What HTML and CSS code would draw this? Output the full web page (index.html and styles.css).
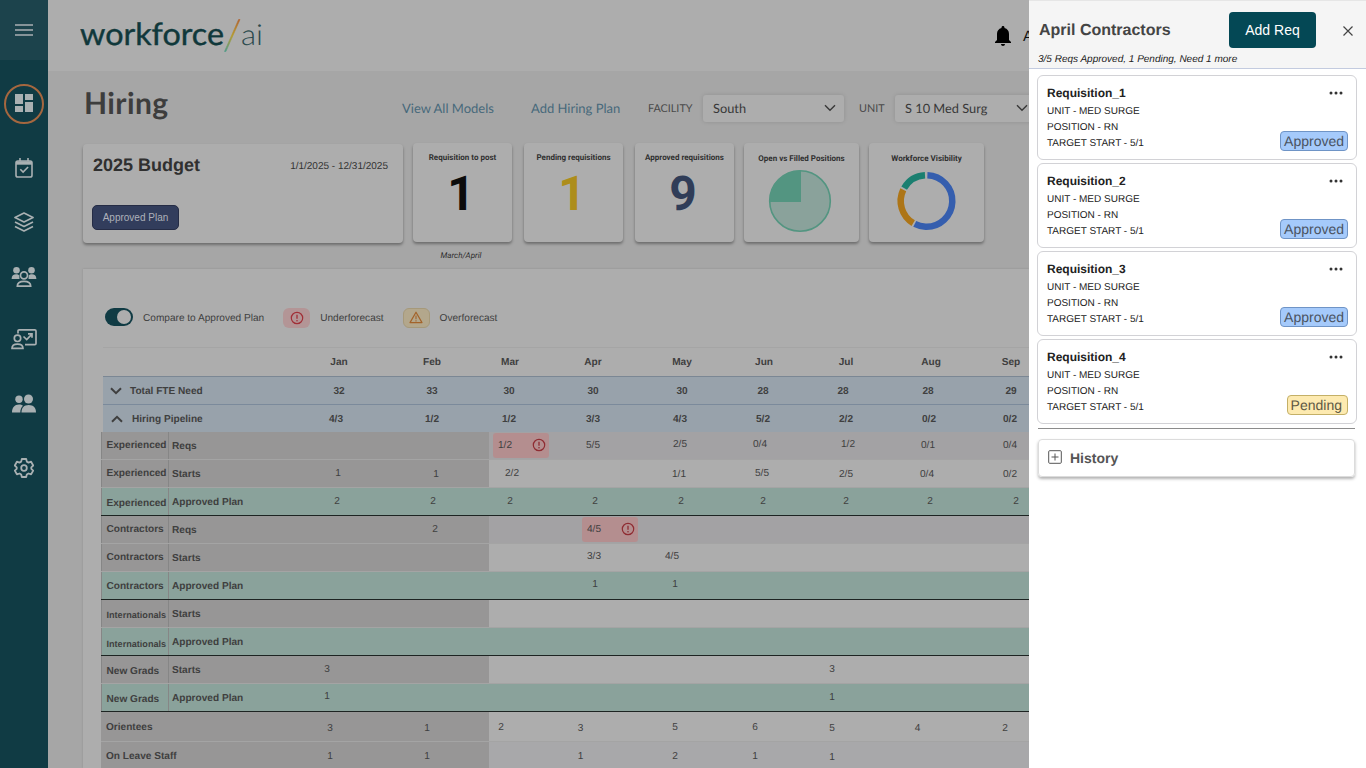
FILE: index.html
```html
<!DOCTYPE html>
<html lang="en">
<head>
    <meta charset="utf-8">
    <title>Workforce AI - Hiring</title>
    <link rel="stylesheet" href="styles.css">
</head>
<body>
    <svg class="defs" width="0" height="0">
        <symbol id="alert" viewBox="0 0 14 14">
            <circle cx="7" cy="7" r="5.7" fill="none" stroke="currentColor" stroke-width="1.2"/>
            <path d="M7 3.8v4" stroke="currentColor" stroke-width="1.3"/>
            <circle cx="7" cy="9.8" r=".8" fill="currentColor"/>
        </symbol>
        <symbol id="chevron" viewBox="0 0 12 8">
            <path d="M1 1.2l5 5 5-5" fill="none" stroke="currentColor"/>
        </symbol>
        <symbol id="dots" viewBox="0 0 14 4">
            <circle cx="2" cy="2" r="1.5"/><circle cx="7" cy="2" r="1.5"/><circle cx="12" cy="2" r="1.5"/>
        </symbol>
    </svg>
    <div class="app">
        <nav class="sidebar">
            <div class="menu">
                <svg width="18" height="12" viewBox="0 0 18 12"><path d="M0 1h18M0 6h18M0 11h18" stroke="#a9b0b2" stroke-width="1.6"/></svg>
            </div>
            <div class="nav-item active">
                <svg width="18" height="18" viewBox="0 0 18 18" fill="#a9b0b2"><path d="M0 0h8v10H0zM10 0h8v6h-8zM0 12h8v6H0zM10 8h8v10h-8z"/></svg>
            </div>
            <div class="nav-item">
                <svg width="20" height="22" viewBox="0 0 20 22" fill="none" stroke="#a9b0b2" stroke-width="1.6"><rect x="2" y="4" width="16" height="16" rx="1.8"/><path d="M2 6h16" stroke-width="3.4"/><path d="M6 1v3M14 1v3M6.3 12.2l2.8 2.8 5-5"/></svg>
            </div>
            <div class="nav-item">
                <svg width="20" height="20" viewBox="0 0 20 20" fill="none" stroke="#a9b0b2" stroke-width="1.7" stroke-linejoin="round"><path d="M10 1l9 4.5-9 4.5-9-4.5zM1 10l9 4.5 9-4.5M1 14.4l9 4.6 9-4.6"/></svg>
            </div>
            <div class="nav-item">
                <svg width="26" height="22" viewBox="0 0 26 22" fill="#a9b0b2"><circle cx="5.5" cy="4.3" r="3.3"/><circle cx="20.5" cy="4.3" r="3.3"/><path d="M.6 13c0-3.3 2-4.7 4.4-4.7 1.5 0 2.6.4 3.3 1.2L8.5 13zM25.4 13c0-3.3-2-4.7-4.4-4.7-1.5 0-2.6.4-3.3 1.2L17.5 13z"/><circle cx="13" cy="9.3" r="3.5" fill="none" stroke="#a9b0b2" stroke-width="1.7"/><path d="M6.3 20.2c0-3.3 2.5-4.9 6.7-4.9s6.7 1.6 6.7 4.9z" fill="none" stroke="#a9b0b2" stroke-width="1.7"/></svg>
            </div>
            <div class="nav-item">
                <svg width="26" height="22" viewBox="0 0 26 22" fill="none" stroke="#a9b0b2" stroke-width="1.7"><path d="M7 5.5V3c0-.8.4-1.2 1.2-1.2h15.6c.8 0 1.2.4 1.2 1.2v12.4c0 .8-.4 1.2-1.2 1.2H14"/><circle cx="6.5" cy="10.3" r="3.2"/><path d="M1 20.4c0-2.9 2-4.3 5.5-4.3s5.5 1.4 5.5 4.3z"/><path d="M12.5 8.5l3.2 3 5-5.2M17 5.8h4v4"/></svg>
            </div>
            <div class="nav-item">
                <svg width="24" height="20" viewBox="0 0 24 20" fill="#a9b0b2"><circle cx="7" cy="5.3" r="3.7"/><circle cx="16.5" cy="5" r="4.5"/><path d="M0 18.5c0-5 2.6-8 7-8 1.7 0 3 .4 4 1.2-1.8 1.7-2.7 3.9-2.7 6.8z"/><path d="M9.5 18.5c0-4.7 2.5-7.4 7.2-7.4s7.3 2.7 7.3 7.4z"/></svg>
            </div>
            <div class="nav-item">
                <svg width="20" height="20" viewBox="0 0 20 20" fill="none" stroke="#a9b0b2" stroke-width="1.8" stroke-linejoin="round"><path d="M7.8 1h4.4l.6 2.6 1.7 1 2.6-.9 2.1 3.8-1.9 1.8v1.5l1.9 1.8-2.1 3.7-2.6-.8-1.7 1-.6 2.5H7.8l-.6-2.5-1.7-1-2.6.8L.8 12.6l1.9-1.8V9.3L.8 7.5l2.1-3.8 2.6.9 1.7-1z"/><circle cx="10" cy="10" r="2.8"/></svg>
            </div>
        </nav>
        <main class="main">
            <header class="topbar">
                <svg class="logo" width="190" height="44" viewBox="0 0 190 44">
                    <defs>
                        <linearGradient id="slash" x1="0" y1="1" x2="0" y2="0"><stop offset="0" stop-color="#4f9a87"/><stop offset=".5" stop-color="#b59a2e"/><stop offset="1" stop-color="#b0622e"/></linearGradient>
                    </defs>
                    <text x="0" y="31.5" textLength="144" lengthAdjust="spacingAndGlyphs" class="logo-name">workforce</text>
                    <path d="M144.500 38.500h1.400L160 6.500h-1.400z" fill="url(#slash)" stroke="url(#slash)" stroke-width=".6"/>
                    <text x="161" y="31.5" textLength="22" lengthAdjust="spacingAndGlyphs" class="logo-ai">ai</text>
                </svg>
                <div class="user">
                    <svg width="18" height="20" viewBox="0 0 18 20"><path d="M9 0c.9 0 1.5.6 1.5 1.5v.6c2.9.7 4.5 3 4.5 5.9v6l2 2v1H1v-1l2-2V8c0-2.9 1.6-5.2 4.5-5.9v-.6C7.5.6 8.1 0 9 0zM7 18h4c0 1.100-.9 2-2 2s-2-.9-2-2z"/></svg>
                    <span>A</span>
                </div>
            </header>
            <div class="titlebar">
                <h1>Hiring</h1>
                <a class="link models">View All Models</a>
                <a class="link plan">Add Hiring Plan</a>
                <span class="field-name facility">FACILITY</span>
                <div class="select south"><span>South</span><svg width="12" height="8"><use href="#chevron"/></svg></div>
                <span class="field-name unit">UNIT</span>
                <div class="select unit-select"><span>S 10 Med Surg</span><svg width="12" height="8"><use href="#chevron"/></svg></div>
            </div>
            <div class="cards">
                <div class="card budget">
                    <div class="budget-head"><h2>2025 Budget</h2><span>1/1/2025 - 12/31/2025</span></div>
                    <button class="plan-btn">Approved Plan</button>
                </div>
                <div class="stat-col">
                    <div class="card stat"><h3>Requisition to post</h3><strong>1</strong></div>
                    <em>March/April</em>
                </div>
                <div class="card stat yellow"><h3>Pending requisitions</h3><strong>1</strong></div>
                <div class="card stat navy"><h3>Approved requisitions</h3><strong>9</strong></div>
                <div class="card chart">
                    <h3>Open vs Filled Positions</h3>
                    <svg width="64" height="64" viewBox="0 0 64 64"><circle cx="32" cy="32" r="30.3" fill="#8aa29b" stroke="#539581" stroke-width="1.6"/><path d="M33 33V1.500A31 31 0 0 0 1.500 33z" fill="#539581"/></svg>
                </div>
                <div class="card chart">
                    <h3>Workforce Visibility</h3>
                    <svg width="64" height="64" viewBox="0 0 64 64" fill="none" stroke-width="6.5">
                        <circle cx="33.500" cy="32" r="25.8" stroke="#355eae" pathLength="100" stroke-dasharray="57 43" transform="rotate(-88 33.500 32)"/>
                        <circle cx="33.500" cy="32" r="25.8" stroke="#ad7517" pathLength="100" stroke-dasharray="23.5 76.5" transform="rotate(121 33.500 32)"/>
                        <circle cx="33.500" cy="32" r="25.8" stroke="#1b7f70" pathLength="100" stroke-dasharray="15.7 84.3" transform="rotate(210 33.500 32)"/>
                    </svg>
                </div>
            </div>
            <section class="panel">
                <div class="legend">
                    <span class="toggle"></span>
                    <span class="legend-text">Compare to Approved Plan</span>
                    <span class="tag red"><svg width="14" height="14"><use href="#alert"/></svg></span>
                    <span class="legend-text">Underforecast</span>
                    <span class="tag amber"><svg width="14" height="13" viewBox="0 0 14 13"><path d="M7 1.200L13 11.600H1z" fill="none" stroke="#a3632a" stroke-width="1.2" stroke-linejoin="round"/><path d="M7 4.500v3.800M7 9.200v1.200" stroke="#a3632a" stroke-width="1.1"/></svg></span>
                    <span class="legend-text">Overforecast</span>
                </div>
                <div class="table">
                    <div class="row months">
                        <b></b><b></b><b>Jan</b><b>Feb</b><b>Mar</b><b>Apr</b><b>May</b><b>Jun</b><b>Jul</b><b>Aug</b><b>Sep</b>
                    </div>
                    <div class="row blue">
                        <div class="group total"><svg width="12" height="8"><use href="#chevron"/></svg><span>Total FTE Need</span></div>
                        <b>32</b><b>33</b><b class="l1">30</b><b>30</b><b>30</b><b class="l1">28</b><b class="l3">28</b><b class="l3">28</b><b>29</b>
                    </div>
                    <div class="row blue">
                        <div class="group pipeline"><svg width="12" height="8"><use href="#chevron"/></svg><span>Hiring Pipeline</span></div>
                        <b class="l3">4/3</b><b>1/2</b><b class="l1">1/2</b><b>3/3</b><b class="l2">4/3</b><b class="l1">5/2</b><b>2/2</b><b class="l2">0/2</b><b class="l1">0/2</b>
                    </div>
                    <div class="row reqs">
                        <b class="type">Experienced</b><b class="kind">Reqs</b>
                        <i></i><i></i><i class="flag mar">1/2<svg width="14" height="14"><use href="#alert"/></svg></i><i class="u1">5/5</i><i class="l2 u2">2/5</i><i class="l4 u2">0/4</i><i class="r2 u2">1/2</i><i class="l3 u1">0/1</i><i class="l1 u1">0/4</i>
                    </div>
                    <div class="row">
                        <b class="type">Experienced</b><b class="kind">Starts</b>
                        <i class="l1 u1">1</i><i class="r4">1</i><i class="r2 u1">2/2</i><i></i><i class="l3">1/1</i><i class="l2 u1">5/5</i><i>2/5</i><i class="l4">0/4</i><i class="l1">0/2</i>
                    </div>
                    <div class="row green">
                        <b class="type low">Experienced</b><b class="kind">Approved Plan</b>
                        <i class="l2 u1">2</i><i class="r1 u1">2</i><i class="u1">2</i><i class="r2 u1">2</i><i class="l1 u1">2</i><i class="l1 u1">2</i><i class="u1">2</i><i class="l1 u1">2</i><i class="r5 u1">2</i>
                    </div>
                    <div class="row reqs">
                        <b class="type">Contractors</b><b class="kind">Reqs</b>
                        <i></i><i class="r3 u1">2</i><i></i><i class="flag apr">4/5<svg width="14" height="14"><use href="#alert"/></svg></i><i></i><i></i><i></i><i></i><i></i>
                    </div>
                    <div class="row">
                        <b class="type">Contractors</b><b class="kind">Starts</b>
                        <i></i><i></i><i></i><i class="r1 u2">3/3</i><i class="l10 u2">4/5</i><i></i><i></i><i></i><i></i>
                    </div>
                    <div class="row green">
                        <b class="type mid">Contractors</b><b class="kind">Approved Plan</b>
                        <i></i><i></i><i></i><i class="r2 u2">1</i><i class="l7 u2">1</i><i></i><i></i><i></i><i></i>
                    </div>
                    <div class="row">
                        <b class="type small mid">Internationals</b><b class="kind">Starts</b>
                    </div>
                    <div class="row green">
                        <b class="type small low">Internationals</b><b class="kind">Approved Plan</b>
                    </div>
                    <div class="row late">
                        <b class="type low">New Grads</b><b class="kind">Starts</b>
                        <i class="l3 u1">3</i><i></i><i></i><i></i><i></i><i></i><i class="u1">3</i><i></i><i></i>
                    </div>
                    <div class="row green late">
                        <b class="type low">New Grads</b><b class="kind">Approved Plan</b>
                        <i class="l3 u2">1</i><i></i><i></i><i></i><i></i><i></i><i class="u1">1</i><i></i><i></i>
                    </div>
                    <div class="row late wide">
                        <b class="kind">Orientees</b>
                        <i class="d1">3</i><i class="d1">1</i><i>2</i><i class="d1">3</i><i>5</i><i>6</i><i class="d1">5</i><i class="d1">4</i><i class="d1">2</i>
                    </div>
                    <div class="row late wide leave">
                        <b class="kind">On Leave Staff</b>
                        <i class="u1">1</i><i class="u1">1</i><i></i><i class="u1">1</i><i class="u1">2</i><i class="u1">1</i><i>1</i><i></i><i></i>
                    </div>
                </div>
            </section>
        </main>
        <aside class="drawer">
            <header class="drawer-head">
                <div class="drawer-title">
                    <h2>April Contractors</h2>
                    <button class="add">Add Req</button>
                    <svg width="10" height="10" viewBox="0 0 10 10"><path d="M.5.500l9 9M9.500.500l-9 9" stroke="#444" stroke-width="1.2"/></svg>
                </div>
                <p>3/5 Reqs Approved, 1 Pending, Need 1 more</p>
            </header>
            <div class="reqs-list">
                <article class="req">
                    <div><h4>Requisition_1</h4><p>UNIT - MED SURGE</p><p>POSITION - RN</p><p>TARGET START - 5/1</p></div>
                    <div class="req-side"><svg width="14" height="4"><use href="#dots"/></svg><span class="badge">Approved</span></div>
                </article>
                <article class="req">
                    <div><h4>Requisition_2</h4><p>UNIT - MED SURGE</p><p>POSITION - RN</p><p>TARGET START - 5/1</p></div>
                    <div class="req-side"><svg width="14" height="4"><use href="#dots"/></svg><span class="badge">Approved</span></div>
                </article>
                <article class="req">
                    <div><h4>Requisition_3</h4><p>UNIT - MED SURGE</p><p>POSITION - RN</p><p>TARGET START - 5/1</p></div>
                    <div class="req-side"><svg width="14" height="4"><use href="#dots"/></svg><span class="badge">Approved</span></div>
                </article>
                <article class="req">
                    <div><h4>Requisition_4</h4><p>UNIT - MED SURGE</p><p>POSITION - RN</p><p>TARGET START - 5/1</p></div>
                    <div class="req-side"><svg width="14" height="4"><use href="#dots"/></svg><span class="badge pending">Pending</span></div>
                </article>
            </div>
            <hr>
            <div class="history">
                <svg width="14" height="14" viewBox="0 0 14 14" fill="none" stroke="#555" stroke-width="1"><rect x=".7" y=".7" width="12.6" height="12.6" rx="1"/><path d="M7 3.500v7M3.500 7h7"/></svg>
                <span>History</span>
            </div>
        </aside>
    </div>
</body>
</html>
```
FILE: styles.css
```css
* {
    box-sizing: border-box;
}
body {
    margin: 0;
    font-family: "Liberation Sans", Arial, sans-serif;
    text-rendering: geometricPrecision;
    color: #3f3f3f;
    background-color: #a6a6a6;
}
h1, h2, h3, h4, p {
    margin: 0;
}
svg {
    display: block;
    flex-shrink: 0;
}
.defs {
    position: absolute;
}
.app {
    display: flex;
    width: 1366px;
    height: 768px;
    overflow: hidden;
}

/* sidebar */
.sidebar {
    width: 48px;
    flex-shrink: 0;
    background-color: #103b44;
}
.menu {
    height: 60px;
    display: flex;
    align-items: center;
    justify-content: center;
    background-color: #1c434c;
}
.nav-item {
    height: 24px;
    display: flex;
    align-items: center;
    justify-content: center;
}
.nav-item.active {
    width: 40px;
    height: 40px;
    margin: 24px 4px 0;
    padding-bottom: 2px;
    border: 2px solid #a5673f;
    border-radius: 50%;
}
.nav-item:nth-child(3) { margin-top: 32px; }
.nav-item:nth-child(4) { margin-top: 30px; }
.nav-item:nth-child(5) { margin-top: 31px; }
.nav-item:nth-child(6) { margin-top: 38px; }
.nav-item:nth-child(7) { margin-top: 41px; }
.nav-item:nth-child(8) { margin-top: 40px; }

/* page */
.main {
    width: 981px;
    flex-shrink: 0;
    overflow: hidden;
}
.topbar {
    height: 71px;
    display: flex;
    justify-content: space-between;
    padding: 13px 0 0 32px;
    background-color: #adadad;
}
.logo-name {
    font-family: Lato, sans-serif;
    font-size: 31px;
    fill: #10383b;
    stroke: #10383b;
    stroke-width: .4px;
}
.logo-ai {
    font-family: Lato, sans-serif;
    font-weight: 300;
    font-size: 29px;
    fill: #2b4a4d;
}
.user {
    display: flex;
    align-items: center;
    gap: 11px;
    width: 35px;
    height: 46px;
    font-size: 15px;
    color: #111;
}
.titlebar {
    height: 72px;
    display: flex;
    align-items: center;
    padding: 3px 0 0 36px;
    white-space: nowrap;
}
.titlebar > * {
    flex-shrink: 0;
}
h1 {
    width: 318px;
    margin-top: -11px;
    font-family: Lato, sans-serif;
    font-size: 30px;
    letter-spacing: .4px;
    color: #3d3d3d;
}
.link {
    margin-top: -2px;
    font-family: Lato, sans-serif;
    font-size: 13px;
    color: #47697b;
}
.models {
    width: 129px;
}
.plan {
    width: 117px;
}
.field-name {
    font-family: Lato, sans-serif;
    font-size: 10.8px;
    color: #4a4a4a;
}
.facility {
    width: 55px;
}
.unit {
    width: 36px;
}
.select {
    height: 27px;
    display: flex;
    align-items: center;
    justify-content: space-between;
    padding: 0 8px 1px 10px;
    border-radius: 3px;
    background-color: #adadad;
    box-shadow: 0 0 4px rgba(0, 0, 0, .13);
    font-family: Lato, sans-serif;
    font-size: 12.8px;
    color: #383838;
}
.select svg {
    stroke-width: 1.4px;
}
.south {
    width: 141px;
    margin-right: 15px;
}
.unit-select {
    width: 141px;
}
.cards {
    height: 126px;
    display: flex;
    align-items: flex-start;
    padding-left: 35px;
}
.card {
    height: 99px;
    margin-right: 10px;
    border-radius: 4px;
    background-color: #adadad;
    box-shadow: 0 2px 3px rgba(0, 0, 0, .35);
}
.budget {
    width: 320px;
    margin-top: 1px;
    padding: 11px 15px 0 10px;
}
.budget-head {
    display: flex;
    justify-content: space-between;
    align-items: center;
    font-size: 10px;
    color: #333;
}
.budget-head span {
    padding-top: 2px;
}
h2 {
    font-size: 18px;
    line-height: 21px;
    color: #303030;
}
.plan-btn {
    width: 87px;
    height: 25px;
    margin: 29px 0 0 -1px;
    padding: 0 0 1px;
    border: 1px solid #252c45;
    border-radius: 5px;
    background-color: #323d5c;
    font: 10px "Liberation Sans", sans-serif;
    color: #aeb1ba;
}
.stat {
    width: 99px;
    margin-right: 12px;
    padding-top: 9px;
    text-align: center;
    color: #0c0c0c;
}
.stat-col em {
    display: block;
    width: 99px;
    margin-top: 9px;
    padding-right: 3px;
    text-align: center;
    font: italic 8px Roboto, sans-serif;
    color: #2e2e2e;
}
h3 {
    font: bold 8px/12px Roboto, sans-serif;
    color: #303030;
    white-space: nowrap;
}
.stat strong {
    display: block;
    padding: 1px 3px 0 0;
    font: bold 48px/58px Roboto, sans-serif;
}
.yellow strong {
    color: #ad8d1b;
}
.navy {
    margin-right: 10px;
}
.navy strong {
    color: #303d58;
}
.chart {
    width: 115px;
    padding-top: 10px;
    text-align: center;
}
.chart svg {
    margin: 4px auto 0 24px;
}

/* forecast table */
.panel {
    height: 499px;
    margin-left: 35px;
    padding: 36px 0 0 18px;
    background-color: #adadad;
    box-shadow: 0 0 2px rgba(0, 0, 0, .15);
}
.legend {
    height: 24px;
    display: flex;
    align-items: center;
    padding-left: 4px;
    font-size: 10.1px;
    white-space: nowrap;
}
.legend-text {
    padding-top: 2px;
}
.toggle {
    width: 28px;
    height: 18px;
    margin-right: 10px;
    padding: 2px;
    border-radius: 9px;
    background-color: #103b44;
}
.toggle::after {
    content: "";
    display: block;
    width: 14px;
    height: 14px;
    margin-left: 10px;
    border-radius: 50%;
    background-color: #adadad;
}
.tag {
    width: 27px;
    height: 20px;
    margin: 1px 10px 0 19px;
    display: flex;
    align-items: center;
    justify-content: center;
    border-radius: 6px;
}
.red {
    background-color: #b39596;
    color: #a12f37;
}
.amber {
    background-color: #b3a78c;
    border: 1px solid #a6997a;
}
.table {
    padding-top: 18px;
    font-size: 10.1px;
}
.row {
    width: 942px;
    height: 28px;
    display: grid;
    grid-template-columns: 68px 124px 92px 94px 62px 104px 74px 90px 74px 96px 64px;
    grid-template-rows: 100%;
    align-items: center;
    border-bottom: 1px solid #a4a4a4;
    background: linear-gradient(to right, #979696 388px, #adadad 388px);
    white-space: nowrap;
}
.row b, .row i {
    padding-top: 2px;
    font-style: normal;
    text-align: center;
    translate: var(--x, 0) var(--y, 0);
}
.late {
    grid-template-columns: 68px 114px 94px 100px 48px 111px 78px 82px 72px 99px 76px;
}
.months {
    height: 30px;
    margin-left: 2px;
    padding-bottom: 2px;
    text-indent: -4px;
    background: #adadad;
    border-top: 1px solid #a5a5a5;
    border-bottom: 1px solid #7b8794;
}
.blue {
    height: 27px;
    margin-left: 2px;
    grid-template-columns: 190px 92px 94px 62px 104px 74px 90px 74px 96px 64px;
    background: #98a2ab;
    border-bottom: 0;
}
.months + .blue {
    height: 28px;
    border-bottom: 1px solid #7b8a9b;
}
.group {
    display: flex;
    align-items: center;
    padding-left: 7px;
    gap: 8px;
    font-weight: bold;
}
.group span {
    padding-top: 2px;
}
.group svg {
    stroke-width: 2px;
}
.pipeline {
    padding-left: 8px;
    gap: 9px;
}
.pipeline svg {
    rotate: 180deg;
}
.reqs {
    background: linear-gradient(to right, #979696 388px, #a3a2a4 388px);
}
.leave {
    background: linear-gradient(to right, #979696 388px, #a8a8aa 388px);
}
.green {
    background: #8aa29b;
    border-bottom: 1px solid #1d2422;
}
.row .type {
    height: 100%;
    padding: 1px 0 0 4.500px;
    border-right: 1px solid #868686;
    border-left: 1px solid #868686;
    text-align: left;
    line-height: 26px;
}
.row .kind {
    padding-left: 3px;
    text-align: left;
}
.row .mid {
    line-height: 28px;
}
.row .low {
    line-height: 30px;
}
.row .small {
    font-size: 9.100px;
}
.wide {
    height: 30px;
    grid-template-columns: 182px 94px 100px 48px 111px 78px 82px 72px 99px 76px;
}
.wide .kind {
    padding-left: 5px;
}
.leave .kind {
    padding-top: 0;
}
.row .flag {
    width: 56px;
    height: 25px;
    display: flex;
    align-items: center;
    justify-content: space-between;
    padding: 0 3px 1px 5px;
    border-radius: 3px;
    background-color: #b48e8f;
}
.flag svg {
    color: #8f2c32;
}
.row .mar {
    margin-left: 14px;
}
.row .apr {
    margin-left: 41px;
}

/* hand-tuned number offsets */
.l1 { --x: -1px; }
.l2 { --x: -2px; }
.l3 { --x: -3px; }
.l4 { --x: -4px; }
.l7 { --x: -7px; }
.l10 { --x: -10px; }
.r1 { --x: 1px; }
.r2 { --x: 2px; }
.r3 { --x: 3px; }
.r4 { --x: 4px; }
.r5 { --x: 5px; }
.u1 { --y: -1px; }
.u2 { --y: -2px; }
.d1 { --y: 1px; }

/* drawer */
.drawer {
    width: 337px;
    flex-shrink: 0;
    background-color: #fff;
    z-index: 1;
}
.drawer-head {
    height: 69px;
    padding: 11px 13px 0 10px;
    background-color: #f5f5f5;
    border-top: 1px solid #e6e6e6;
    border-bottom: 1px solid #c3cbdf;
}
.drawer-title {
    display: flex;
    align-items: center;
}
.drawer-title h2 {
    width: 190px;
    padding-top: 1px;
    font-size: 16px;
    color: #444;
}
.drawer-title svg {
    margin-top: 2px;
}
.add {
    width: 87px;
    height: 36px;
    margin-right: 27px;
    border: none;
    border-radius: 4px;
    background-color: #044855;
    font: 14px "Liberation Sans", sans-serif;
    color: #fff;
}
.drawer-head p {
    margin: 5px 0 0 -1px;
    font-size: 10px;
    line-height: 13px;
    font-style: italic;
    color: #222;
}
.reqs-list {
    display: flex;
    flex-direction: column;
    gap: 3px;
    margin: 6px 9px 0 8px;
}
.req {
    height: 85px;
    display: flex;
    justify-content: space-between;
    padding: 8px 8px 8px 9px;
    border: 1px solid #d2d2d6;
    border-radius: 6px;
}
.req h4 {
    margin-bottom: 1px;
    font-size: 12px;
    line-height: 19px;
    color: #222;
}
.req p {
    font-size: 10px;
    line-height: 16px;
    color: #222;
}
.req-side {
    display: flex;
    flex-direction: column;
    justify-content: space-between;
    align-items: flex-end;
}
.req-side svg {
    margin: 7px 5px 0 0;
    fill: #333;
}
.badge {
    height: 20px;
    padding: 0 3px;
    border: 1px solid #6f94c6;
    border-radius: 4px;
    background-color: #a5cafb;
    font-size: 14px;
    line-height: 19px;
    color: #4a5361;
}
.pending {
    padding: 0 5px 0 3px;
    background-color: #fdeab0;
    border-color: #c4b067;
    color: #5d5844;
}
hr {
    height: 1px;
    margin: 4px 11px 0 9px;
    border: none;
    background-color: #8c8c8c;
}
.history {
    height: 38px;
    display: flex;
    align-items: center;
    gap: 8px;
    margin: 10px 11px 0 9px;
    padding: 0 0 2px 9px;
    border: 1px solid #dcdcdc;
    border-radius: 4px;
    box-shadow: 0 2px 3px rgba(0, 0, 0, .3);
    font-size: 14px;
    font-weight: bold;
    color: #555;
}
.history span {
    padding-top: 1px;
}
```
